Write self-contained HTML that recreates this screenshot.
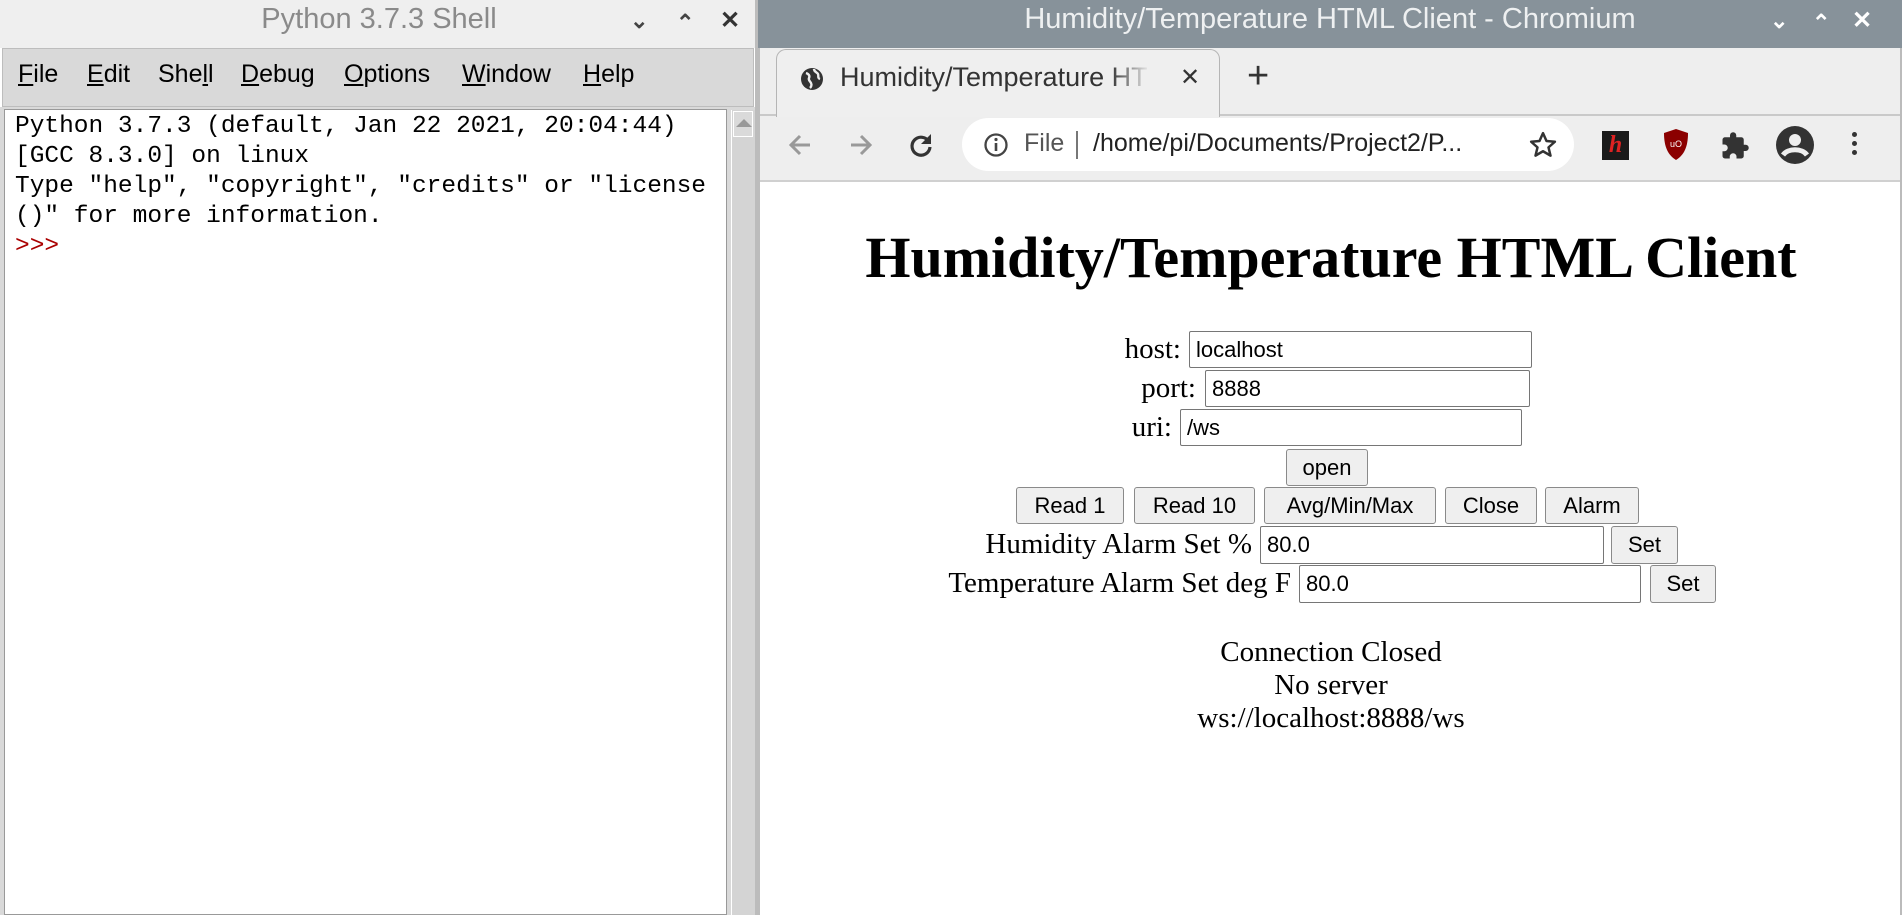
<!DOCTYPE html>
<html><head><meta charset="utf-8"><style>
*{margin:0;padding:0;box-sizing:border-box}
body{width:1902px;height:915px;position:relative;overflow:hidden;background:#fff;font-family:"Liberation Sans",sans-serif}
.a{position:absolute}
.mono{font-family:"Liberation Mono",monospace;font-size:24.5px;line-height:30px;color:#000;white-space:pre}
.menu span{position:absolute;top:60px;font-size:25px;color:#000}
.menu u{text-decoration:underline}
.serif{font-family:"Liberation Serif",serif;font-size:29px;color:#000;white-space:nowrap}
.inp{position:absolute;border:1.5px solid #767676;border-radius:2px;background:#fff;font-size:22px;padding-left:6px;display:flex;align-items:center}
.btn{position:absolute;border:1.5px solid #8a8a8a;border-radius:3px;background:#efefef;font-size:22px;display:flex;align-items:center;justify-content:center}
</style></head><body>
<div class="a" style="left:0;top:0;width:758px;height:48px;background:#efefef"></div>
<div class="a" style="left:0;top:3px;width:758px;text-align:center;font-size:29px;color:#8a8a8a">Python 3.7.3 Shell</div>
<div class="a" style="left:630px;top:8px;font-size:22px;color:#444;font-weight:bold">&#8964;</div>
<div class="a" style="left:676px;top:10px;font-size:22px;color:#444;font-weight:bold">&#8963;</div>
<div class="a" style="left:720px;top:6px;font-size:24px;color:#333;font-weight:bold">✕</div>
<div class="a" style="left:2px;top:48px;width:752px;height:59px;background:#d9d9d9;border:1px solid #bdbdbd"></div>
<div class="menu">
<span style="left:18px"><u>F</u>ile</span>
<span style="left:87px"><u>E</u>dit</span>
<span style="left:158px">She<u>l</u>l</span>
<span style="left:241px"><u>D</u>ebug</span>
<span style="left:344px"><u>O</u>ptions</span>
<span style="left:462px"><u>W</u>indow</span>
<span style="left:583px"><u>H</u>elp</span>
</div>
<div class="a" style="left:0;top:107px;width:758px;height:808px;background:#d9d9d9"></div>
<div class="a" style="left:4px;top:109px;width:723px;height:806px;background:#fff;border:1px solid #999"></div>
<div class="a mono" style="left:15px;top:112px">Python 3.7.3 (default, Jan 22 2021, 20:04:44)
[GCC 8.3.0] on linux
Type "help", "copyright", "credits" or "license
()" for more information.
<span style="color:#a00">&gt;&gt;&gt;</span></div>
<div class="a" style="left:731px;top:110px;width:24px;height:805px;background:#d4d4d4;border-left:1px solid #fff"></div>
<div class="a" style="left:733px;top:111px;width:20px;height:26px;background:#dadada;border:1px solid #fff"></div>
<div class="a" style="left:736px;top:119px;width:0;height:0;border-left:8px solid transparent;border-right:8px solid transparent;border-bottom:8px solid #999"></div>
<div class="a" style="left:755px;top:0;width:5px;height:915px;background:#bcbcbc"></div>

<div class="a" style="left:758px;top:0;width:1144px;height:48px;background:#87929a"></div>
<div class="a" style="left:758px;top:3px;width:1144px;text-align:center;font-size:29px;color:#eef0f1">Humidity/Temperature HTML Client - Chromium</div>
<div class="a" style="left:1770px;top:8px;font-size:22px;color:#fff;font-weight:bold">&#8964;</div>
<div class="a" style="left:1812px;top:10px;font-size:22px;color:#fff;font-weight:bold">&#8963;</div>
<div class="a" style="left:1852px;top:6px;font-size:24px;color:#fff;font-weight:bold">✕</div>
<div class="a" style="left:760px;top:48px;width:1142px;height:134px;background:#eeeeee;border-bottom:2px solid #d0d0d0"></div>
<div class="a" style="left:776px;top:49px;width:444px;height:68px;background:#efefef;border:1px solid #b5b5b5;border-bottom:none;border-radius:10px 10px 0 0"></div>
<div class="a" style="left:760px;top:114px;width:16px;height:2px;background:#c9c9c9"></div>
<div class="a" style="left:1220px;top:114px;width:682px;height:2px;background:#c9c9c9"></div>
<svg class="a" style="left:800px;top:67px" width="24" height="24" viewBox="0 0 24 24"><circle cx="12" cy="12" r="11" fill="#333"/><path d="M6 6c3 1 4 3 3 5s1 3 2 5 0 4-1 5M14 2c0 3 3 3 4 5s-1 4 2 5" stroke="#eee" stroke-width="2.4" fill="none"/></svg>
<div class="a" style="left:840px;top:62px;width:320px;overflow:hidden;white-space:nowrap;font-size:27px;color:#333">Humidity/Temperature HTML</div>
<div class="a" style="left:1110px;top:60px;width:50px;height:40px;background:linear-gradient(90deg,rgba(239,239,239,0),#efefef 80%)"></div>
<div class="a" style="left:1180px;top:63px;font-size:24px;color:#333">✕</div>
<div class="a" style="left:1247px;top:55px;font-size:38px;color:#333">+</div>
<svg class="a" style="left:785px;top:130px" width="30" height="30" viewBox="0 0 30 30"><path d="M25 15H7M15 6l-9 9 9 9" stroke="#999" stroke-width="3" fill="none"/></svg>
<svg class="a" style="left:846px;top:130px" width="30" height="30" viewBox="0 0 30 30"><path d="M5 15h18M15 6l9 9-9 9" stroke="#999" stroke-width="3" fill="none"/></svg>
<svg class="a" style="left:906px;top:130px" width="30" height="30" viewBox="0 0 30 30"><path d="M23 12A9 9 0 1 0 24 17" stroke="#333" stroke-width="3.2" fill="none"/><path d="M25 4v10H15z" fill="#333"/></svg>
<div class="a" style="left:962px;top:118px;width:612px;height:53px;background:#fff;border-radius:27px"></div>
<svg class="a" style="left:983px;top:132px" width="26" height="26" viewBox="0 0 26 26"><circle cx="13" cy="13" r="10.5" stroke="#444" stroke-width="2.3" fill="none"/><path d="M13 11v8" stroke="#444" stroke-width="2.6"/><circle cx="13" cy="7.5" r="1.6" fill="#444"/></svg>
<div class="a" style="left:1024px;top:129px;font-size:25px;color:#555">File</div>
<div class="a" style="left:1076px;top:131px;width:2px;height:28px;background:#777"></div>
<div class="a" style="left:1093px;top:129px;font-size:25px;color:#222">/home/pi/Documents/Project2/P...</div>
<svg class="a" style="left:1528px;top:130px" width="30" height="30" viewBox="0 0 24 24"><path d="M12 2.5l2.8 6.3 6.7.6-5.1 4.5 1.6 6.6L12 17l-6 3.5 1.6-6.6-5.1-4.5 6.7-.6z" stroke="#333" stroke-width="2" fill="none" stroke-linejoin="round"/></svg>
<div class="a" style="left:1602px;top:131px;width:27px;height:29px;background:#1a1a1a;color:#d22;font-family:'Liberation Serif',serif;font-style:italic;font-weight:bold;font-size:24px;text-align:center;line-height:29px">h</div>
<svg class="a" style="left:1662px;top:128px" width="28" height="33" viewBox="0 0 28 33"><path d="M14 1l12 4c0 14-4 22-12 27C6 27 2 19 2 5z" fill="#8b0000"/><text x="14" y="19" font-size="9" fill="#fff" text-anchor="middle" font-family="Liberation Sans">uO</text></svg>
<svg class="a" style="left:1720px;top:131px" width="30" height="30" viewBox="0 0 24 24"><path d="M20.5 11H19V7a2 2 0 0 0-2-2h-4V3.5a2.5 2.5 0 0 0-5 0V5H4a2 2 0 0 0-2 2v3.8h1.5a2.7 2.7 0 0 1 0 5.4H2V20a2 2 0 0 0 2 2h3.8v-1.5a2.7 2.7 0 0 1 5.4 0V22H17a2 2 0 0 0 2-2v-4h1.5a2.5 2.5 0 0 0 0-5z" fill="#333"/></svg>
<svg class="a" style="left:1775px;top:125px" width="40" height="40" viewBox="0 0 40 40"><circle cx="20" cy="20" r="19" fill="#333"/><circle cx="20" cy="15" r="6" fill="#eee"/><path d="M8 30c5-7 19-7 24 0" stroke="#eee" stroke-width="5" fill="none"/></svg>
<div class="a" style="left:1852px;top:132px;width:5px;height:5px;border-radius:50%;background:#333;box-shadow:0 9px 0 #333,0 18px 0 #333"></div>
<div class="a" style="left:1900px;top:48px;width:2px;height:867px;background:#bbb"></div>

<div class="a serif" style="left:762px;top:224px;width:1138px;text-align:center;font-size:58px;font-weight:bold">Humidity/Temperature HTML Client</div>

<div class="a serif" style="left:1000px;top:333px;width:181px;text-align:right">host:</div>
<div class="inp" style="left:1189px;top:331px;width:343px;height:37px">localhost</div>
<div class="a serif" style="left:1000px;top:372px;width:196px;text-align:right">port:</div>
<div class="inp" style="left:1205px;top:370px;width:325px;height:37px">8888</div>
<div class="a serif" style="left:1000px;top:411px;width:172px;text-align:right">uri:</div>
<div class="inp" style="left:1180px;top:409px;width:342px;height:37px">/ws</div>
<div class="btn" style="left:1286px;top:449px;width:82px;height:37px">open</div>
<div class="btn" style="left:1016px;top:487px;width:108px;height:37px">Read 1</div>
<div class="btn" style="left:1134px;top:487px;width:121px;height:37px">Read 10</div>
<div class="btn" style="left:1264px;top:487px;width:172px;height:37px">Avg/Min/Max</div>
<div class="btn" style="left:1445px;top:487px;width:92px;height:37px">Close</div>
<div class="btn" style="left:1545px;top:487px;width:94px;height:37px">Alarm</div>
<div class="a serif" style="left:900px;top:528px;width:352px;text-align:right">Humidity Alarm Set %</div>
<div class="inp" style="left:1260px;top:526px;width:344px;height:38px">80.0</div>
<div class="btn" style="left:1611px;top:526px;width:67px;height:38px">Set</div>
<div class="a serif" style="left:900px;top:567px;width:391px;text-align:right">Temperature Alarm Set deg F</div>
<div class="inp" style="left:1299px;top:565px;width:342px;height:38px">80.0</div>
<div class="btn" style="left:1650px;top:565px;width:66px;height:38px">Set</div>

<div class="a serif" style="left:762px;top:636px;width:1138px;text-align:center;line-height:33px">Connection Closed<br>No server<br>ws://localhost:8888/ws</div>
</body></html>
